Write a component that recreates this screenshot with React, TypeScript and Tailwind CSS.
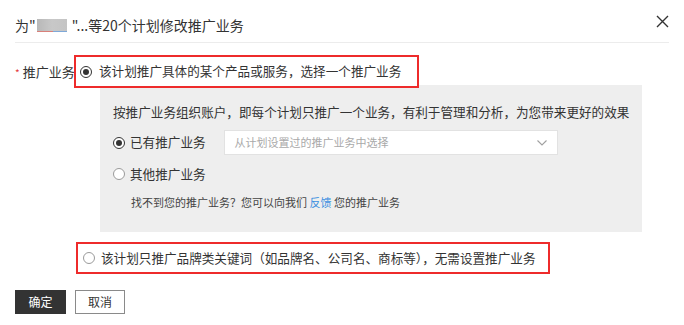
import React from "react";

function Radio({ checked }: { checked?: boolean }) {
  return (
    <span
      className={`flex h-[12px] w-[12px] shrink-0 items-center justify-center rounded-full border ${
        checked ? "border-[#333333]" : "border-[#9a9a9a]"
      } bg-white`}
    >
      {checked && <span className="h-[6px] w-[6px] rounded-full bg-[#333333]" />}
    </span>
  );
}

export default function App() {
  return (
    <div
      className="relative h-[325px] w-[684px] overflow-hidden bg-white text-[#333333]"
      style={{ fontFamily: '"Noto Sans CJK SC", "Noto Sans", sans-serif' }}
    >
      {/* header */}
      <div className="mx-[15px] flex h-[43px] items-start justify-between border-b border-[#ececec]">
        <div className="mt-[15px] flex items-center text-[14px] leading-[20px] text-[#333333]">
          <span>为"</span>
          <span className="mx-[1px] flex h-[13px] w-[30px] flex-col">
            <span className="h-[12px] w-full bg-gradient-to-r from-[#b8b8b8] via-[#c8c8c8] to-[#c4c4c4] blur-[0.5px]" />
            <span className="flex h-[1px] w-full">
              <span className="h-full w-[16px] bg-[#d9807a]" />
              <span className="h-full w-[14px] bg-[#7ea8d8]" />
            </span>
          </span>
          <span className="ml-[4px]">"...等20个计划修改推广业务</span>
        </div>
        <svg className="mt-[15px] mr-[0px]" width="13" height="13" viewBox="0 0 13 13">
          <path d="M1 1 L12 12 M12 1 L1 12" stroke="#333" strokeWidth="1.4" />
        </svg>
      </div>

      {/* form */}
      <div className="mt-[12px] flex">
        <div className="ml-[15px] flex h-[33px] w-[59px] items-center text-[13px]">
          <span className="mr-[3px] mt-[2px] text-[10px] text-[#e4393c]">*</span>
          <span className="whitespace-nowrap">推广业务</span>
        </div>
        <div className="flex flex-col">
          <div className="relative z-10 flex h-[33px] w-[345px] items-center gap-[7px] border-2 border-[#ee2b2b] bg-white pl-[4px] text-[12.6px]">
            <Radio checked />
            <span className="whitespace-nowrap">该计划推广具体的某个产品或服务，选择一个推广业务</span>
          </div>
          <div className="-mt-[3px] ml-[26px] flex h-[147px] w-[542px] flex-col bg-[#eeeeee] pl-[13px] pt-[17px]">
            <div className="text-[12.6px] leading-[20px] whitespace-nowrap">
              按推广业务组织账户，即每个计划只推广一个业务，有利于管理和分析，为您带来更好的效果
            </div>
            <div className="mt-[8px] flex h-[25px] items-center">
              <Radio checked />
              <span className="ml-[5px] text-[12.6px]">已有推广业务</span>
              <div className="ml-[18px] flex h-[25px] w-[334px] items-center justify-between border border-[#e2e2e2] bg-white pl-[10px] pr-[10px]">
                <span className="text-[11px] text-[#a9a9a9]">从计划设置过的推广业务中选择</span>
                <svg width="10" height="6" viewBox="0 0 10 6">
                  <path d="M0.5 0.5 L5 5 L9.5 0.5" fill="none" stroke="#a0a0a0" strokeWidth="1.1" />
                </svg>
              </div>
            </div>
            <div className="mt-[9px] flex h-[20px] items-center">
              <Radio />
              <span className="ml-[5px] text-[12.6px]">其他推广业务</span>
            </div>
            <div className="ml-[18px] mt-[10px] text-[11px] leading-[16px] text-[#444444] whitespace-nowrap">
              找不到您的推广业务？您可以向我们 <span className="text-[#3b8fe0]">反馈</span> 您的推广业务
            </div>
          </div>
          <div className="ml-[2px] mt-[10px] flex h-[32px] w-[474px] items-center gap-[6px] border-2 border-[#ee2b2b] pl-[5px] text-[12.6px]">
            <Radio />
            <span className="whitespace-nowrap">该计划只推广品牌类关键词（如品牌名、公司名、商标等），无需设置推广业务</span>
          </div>
        </div>
      </div>

      {/* buttons */}
      <div className="ml-[15px] mt-[16px] flex gap-[9px] text-[12px]">
        <button className="flex h-[24px] w-[51px] items-center justify-center bg-[#333333] text-white">确定</button>
        <button className="flex h-[24px] w-[50px] items-center justify-center border border-[#8a8a8a] bg-white text-[#333333]">取消</button>
      </div>
    </div>
  );
}
